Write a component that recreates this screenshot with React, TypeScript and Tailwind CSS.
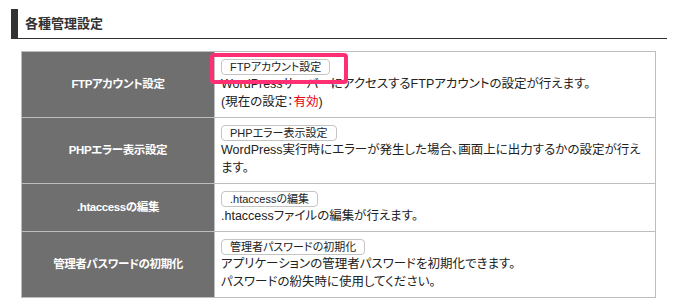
const rows = [
  {
    label: 'FTPアカウント設定',
    button: 'FTPアカウント設定',
    lines: [
      <>WordPressサーバーにアクセスするFTPアカウントの設定が行えます。</>,
      <>
        (現在の設定：<span className="text-[#e60012]">有効</span>)
      </>,
    ],
    highlight: true,
  },
  {
    label: 'PHPエラー表示設定',
    button: 'PHPエラー表示設定',
    lines: [<>WordPress実行時にエラーが発生した場合、画面上に出力するかの設定が行えます。</>],
  },
  {
    label: '.htaccessの編集',
    button: '.htaccessの編集',
    lines: [<>.htaccessファイルの編集が行えます。</>],
  },
  {
    label: '管理者パスワードの初期化',
    button: '管理者パスワードの初期化',
    lines: [
      <>アプリケーションの管理者パスワードを初期化できます。</>,
      <>パスワードの紛失時に使用してください。</>,
    ],
  },
];

export default function App() {
  return (
    <div className="w-[675px] h-[303px] bg-white pt-[9px] font-['Liberation_Sans','Noto_Sans_CJK_JP',sans-serif] [font-feature-settings:'palt'] text-[#222]">
      {/* section title */}
      <div className="ml-[11px] w-[656px] h-[30px] border-l-[7px] border-b border-[#333] pl-[7px] flex items-center">
        <h2 className="text-[13px] font-bold text-[#333] leading-none">各種管理設定</h2>
      </div>

      <table className="ml-[21px] mt-[12px] w-[635px] border-collapse text-[12.5px]">
        <tbody>
          {rows.map((row) => (
            <tr key={row.label}>
              <th className="w-[193px] bg-[#6f6f6f] border border-[#bdbdbd] text-white text-[11.5px] tracking-[-0.4px] font-bold align-middle text-center">
                {row.label}
              </th>
              <td className="border border-[#bdbdbd] align-top px-[6px] pt-[6px] pb-[6px] leading-[18px]">
                <div className="relative h-[17px]">
                  <button className="h-[16px] px-[8px] rounded-[4px] border border-[#c4c4c4] bg-white text-[11px] leading-[14px] text-[#222]">
                    {row.button}
                  </button>
                  {row.highlight && (
                    <div className="absolute left-[-11px] top-[-5px] w-[138px] h-[31px] rounded-[4px] border-[4px] border-[#ff2f73] pointer-events-none" />
                  )}
                </div>
                {row.lines.map((line, i) => (
                  <div key={i}>{line}</div>
                ))}
              </td>
            </tr>
          ))}
        </tbody>
      </table>
    </div>
  );
}
